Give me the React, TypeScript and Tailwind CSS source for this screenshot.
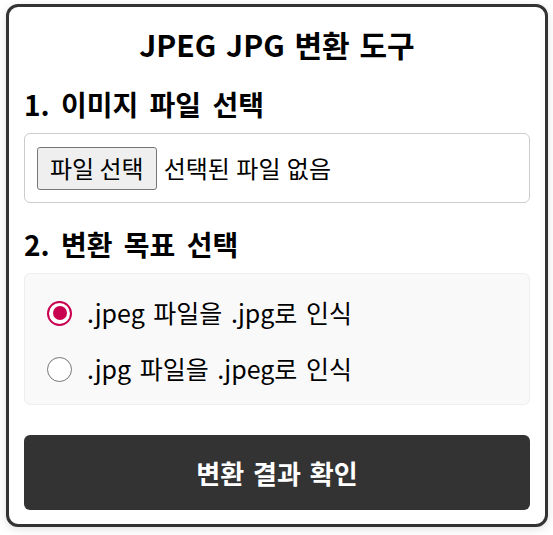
import React, { useState } from 'react';

const FONT = "font-['Noto_Sans_CJK_KR','Noto_Sans',sans-serif]";

const options = [
  { id: 'jpeg-to-jpg', label: '.jpeg 파일을 .jpg로 인식' },
  { id: 'jpg-to-jpeg', label: '.jpg 파일을 .jpeg로 인식' },
];

const Radio: React.FC<{ checked: boolean }> = ({ checked }) => (
  <span
    className={`flex h-[25px] w-[25px] shrink-0 items-center justify-center rounded-full bg-white ${
      checked ? 'border-2 border-[#c8004f]' : 'border-[1.5px] border-[#767676]'
    }`}
  >
    {checked && <span className="h-[14px] w-[14px] rounded-full bg-[#c8004f]" />}
  </span>
);

export default function App() {
  const [target, setTarget] = useState('jpeg-to-jpg');

  return (
    <div className={`min-h-[535px] bg-white pt-[4px] pl-[6px] text-black ${FONT}`}>
      <div className="flex w-[542px] flex-col rounded-[12px] border-[3px] border-[#333] bg-white px-[15px] pt-[15px] pb-[14px] shadow-[0_2px_10px_rgba(0,0,0,0.12)]">
        {/* Title */}
        <h1 className="text-center text-[30px] leading-[44px] font-bold [word-spacing:3px]">JPEG JPG 변환 도구</h1>

        {/* Step 1 */}
        <h2 className="mt-[20px] text-[28px] leading-[36px] font-bold [word-spacing:5px]">1. 이미지 파일 선택</h2>
        <div className="mt-[11px] flex h-[70px] items-center gap-[7px] rounded-[6px] border border-[#ccc] px-[12px]">
          <button className="flex h-[43px] items-center rounded-[3px] border border-[#767676] bg-[#efefef] px-[12px] text-[24px]">
            파일 선택
          </button>
          <span className="text-[24px] [word-spacing:1px]">선택된 파일 없음</span>
        </div>

        {/* Step 2 */}
        <h2 className="mt-[23px] text-[28px] leading-[36px] font-bold [word-spacing:5px]">2. 변환 목표 선택</h2>
        <div className="mt-[11px] flex flex-col gap-[16px] rounded-[6px] border border-[#eee] bg-[#f9f9f9] px-[22px] pt-[19px] pb-[15px]">
          {options.map(({ id, label }) => (
            <label key={id} className="flex h-[40px] cursor-pointer items-center gap-[15px]" onClick={() => setTarget(id)}>
              <Radio checked={target === id} />
              <span className="text-[25px] [word-spacing:3px]">{label}</span>
            </label>
          ))}
        </div>

        {/* Submit */}
        <button className="mt-[30px] flex h-[75px] items-center justify-center rounded-[6px] bg-[#333] text-[26px] font-bold text-white [word-spacing:3px]">
          변환 결과 확인
        </button>
      </div>
    </div>
  );
}
